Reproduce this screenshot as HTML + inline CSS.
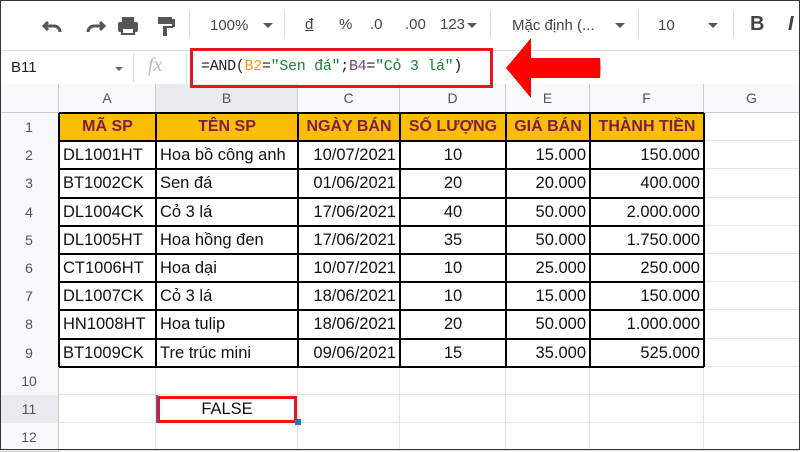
<!DOCTYPE html>
<html><head><meta charset="utf-8"><style>
body{margin:0;width:800px;height:450px;overflow:hidden;background:#fff;font-family:"Liberation Sans",Arial,sans-serif;position:relative}
.a{position:absolute}
.tb{color:#444;font-size:15px}
.cell{position:absolute;font-size:16.5px;color:#111;white-space:nowrap;line-height:28px}
.hd{position:absolute;background:#f8f9fa;color:#555;font-size:14px;text-align:center;border-right:1px solid #ccc;border-bottom:1px solid #ccc;box-sizing:border-box}
</style></head><body>
<div class="a" style="left:0;top:0;width:800px;height:50px;background:#fff;border-bottom:1px solid #ddd"></div>
<svg class="a" style="left:40px;top:14px" width="170" height="24" viewBox="0 0 170 24">
<path d="M8 8 L4 12 L8 16 M4 12 H14 a6 6 0 0 1 6 6" stroke="#555" stroke-width="3" fill="none"/>
<path d="M60 8 L64 12 L60 16 M64 12 H54 a6 6 0 0 0 -6 6" stroke="#555" stroke-width="3" fill="none"/>
<rect x="82" y="3" width="12" height="5" fill="#555"/><rect x="78" y="8" width="20" height="10" rx="2" fill="#555"/><rect x="82" y="14" width="12" height="6" fill="#fff" stroke="#555" stroke-width="2"/>
<rect x="118" y="3" width="14" height="7" fill="#555"/><rect x="132" y="5" width="3" height="8" fill="#555"/><rect x="123" y="12" width="10" height="2" fill="#555"/><rect x="123" y="12" width="4" height="10" fill="#555"/>
</svg>
<div class="a" style="left:189px;top:10px;width:1px;height:28px;background:#ddd"></div>
<div class="a tb" style="left:210px;top:17px">100%</div>
<div class="a" style="left:263px;top:23px;border:5px solid transparent;border-top-color:#555"></div>
<div class="a" style="left:284px;top:10px;width:1px;height:28px;background:#ddd"></div>
<div class="a tb" style="left:305px;top:16px;text-decoration:underline">đ</div>
<div class="a tb" style="left:339px;top:16px">%</div>
<div class="a tb" style="left:370px;top:16px">.0</div>
<div class="a tb" style="left:405px;top:16px">.00</div>
<div class="a tb" style="left:440px;top:16px">123</div>
<div class="a" style="left:467px;top:23px;border:5px solid transparent;border-top-color:#555"></div>
<div class="a" style="left:490px;top:10px;width:1px;height:28px;background:#ddd"></div>
<div class="a tb" style="left:512px;top:17px">Mặc định (...</div>
<div class="a" style="left:615px;top:23px;border:5px solid transparent;border-top-color:#555"></div>
<div class="a" style="left:638px;top:10px;width:1px;height:28px;background:#ddd"></div>
<div class="a tb" style="left:658px;top:17px">10</div>
<div class="a" style="left:708px;top:23px;border:5px solid transparent;border-top-color:#555"></div>
<div class="a" style="left:733px;top:10px;width:1px;height:28px;background:#ddd"></div>
<div class="a" style="left:750px;top:13px;font-size:20px;font-weight:bold;color:#444">B</div>
<div class="a" style="left:788px;top:13px;font-size:20px;font-style:italic;font-weight:bold;color:#444">I</div>
<div class="a" style="left:0;top:51px;width:800px;height:33px;border-bottom:1px solid #ccc"></div>
<div class="a" style="left:11px;top:59px;font-size:15px;color:#222">B11</div>
<div class="a" style="left:115px;top:67px;border:4px solid transparent;border-top-color:#666"></div>
<div class="a" style="left:133px;top:54px;width:1px;height:28px;background:#ddd"></div>
<div class="a" style="left:148px;top:54px;font-size:20px;font-style:italic;color:#bbb;font-family:'Liberation Serif',serif">fx</div>
<div class="a" style="left:186px;top:54px;width:1px;height:28px;background:#ddd"></div>
<div class="a" style="left:201px;top:58px;font-size:15px;font-family:'Liberation Mono','DejaVu Sans Mono',monospace;color:#222;letter-spacing:-0.3px">=AND(<span style="color:#f7981d">B2</span>=<span style="color:#188038">"Sen đá"</span>;<span style="color:#7e3794">B4</span>=<span style="color:#188038">"Cỏ 3 lá"</span>)</div>
<div class="hd" style="left:0;top:84px;width:59px;height:29px"></div>
<div class="hd" style="left:59px;top:84px;width:97px;height:29px;line-height:29px">A</div>
<div class="hd" style="left:156px;top:84px;width:142px;height:29px;line-height:29px;background:#e8eaed">B</div>
<div class="hd" style="left:298px;top:84px;width:102px;height:29px;line-height:29px">C</div>
<div class="hd" style="left:400px;top:84px;width:106px;height:29px;line-height:29px">D</div>
<div class="hd" style="left:506px;top:84px;width:84px;height:29px;line-height:29px">E</div>
<div class="hd" style="left:590px;top:84px;width:114px;height:29px;line-height:29px">F</div>
<div class="hd" style="left:704px;top:84px;width:96px;height:29px;line-height:29px">G</div>
<div class="a" style="left:190px;top:48px;width:297px;height:34px;border:3px solid #e8161b;z-index:5"></div>
<svg class="a" style="left:500px;top:34px;z-index:5" width="110" height="72"><path d="M6 34 L31 4 L31 24 L100 24 Q101 34 100 44 L31 44 L31 64 Z" fill="#fe0000"/></svg>
<div id="g"></div>
<script>
var cols=[59,156,298,400,506,590,704,800];
var data=[
["MÃ SP","TÊN SP","NGÀY BÁN","SỐ LƯỢNG","GIÁ BÁN","THÀNH TIỀN"],
["DL1001HT","Hoa bồ công anh","10/07/2021","10","15.000","150.000"],
["BT1002CK","Sen đá","01/06/2021","20","20.000","400.000"],
["DL1004CK","Cỏ 3 lá","17/06/2021","40","50.000","2.000.000"],
["DL1005HT","Hoa hồng đen","17/06/2021","35","50.000","1.750.000"],
["CT1006HT","Hoa dại","10/07/2021","10","25.000","250.000"],
["DL1007CK","Cỏ 3 lá","18/06/2021","10","15.000","150.000"],
["HN1008HT","Hoa tulip","18/06/2021","20","50.000","1.000.000"],
["BT1009CK","Tre trúc mini","09/06/2021","15","35.000","525.000"]];
var h='';var top0=113,rh=28.2;
for(var r=0;r<12;r++){var y=top0+r*rh;
h+='<div class="hd" style="left:0;top:'+y+'px;width:59px;height:'+(rh+1)+'px;line-height:'+rh+'px;'+(r==10?'background:#e8eaed;':'')+'">'+(r+1)+'</div>';
for(var c=0;c<7;c++){h+='<div class="a" style="left:'+cols[c]+'px;top:'+y+'px;width:'+(cols[c+1]-cols[c])+'px;height:'+rh+'px;box-sizing:border-box;border-right:1px solid #e2e2e2;border-bottom:1px solid #e2e2e2"></div>';}
if(r<9){var row=data[r];for(var c=0;c<6;c++){var x=cols[c],w=cols[c+1]-cols[c];
if(r==0){h+='<div class="cell" style="left:'+x+'px;top:'+y+'px;width:'+w+'px;height:'+rh+'px;background:#fbbc04;color:#7b1f48;font-weight:bold;text-align:center;font-size:16px">'+row[c]+'</div>';}
else{var al=c<2?'left;padding-left:4px':'right;padding-right:4px';if(c==3)al='center';
h+='<div class="cell" style="left:'+x+'px;top:'+y+'px;width:'+w+'px;box-sizing:border-box;text-align:'+al+'">'+row[c]+'</div>';}}}}
for(var r=0;r<=9;r++){h+='<div class="a" style="left:59px;top:'+(top0+r*rh-1)+'px;width:645px;height:2px;background:#000"></div>';}
for(var c=0;c<7;c++){h+='<div class="a" style="left:'+(cols[c]-1)+'px;top:'+top0+'px;width:2px;height:'+(9*rh)+'px;background:#000"></div>';}
var y11=top0+10*rh;
h+='<div class="cell" style="left:156px;top:'+y11+'px;width:142px;text-align:center">FALSE</div>';
h+='<div class="a" style="left:156px;top:'+y11+'px;width:2px;height:'+rh+'px;background:#1a73e8"></div>';
h+='<div class="a" style="left:157px;top:'+(y11+1)+'px;width:134px;height:21px;border:3px solid #e8161b"></div>';
h+='<div class="a" style="left:295px;top:'+(y11+rh-4)+'px;width:6px;height:6px;background:#1a73e8"></div>';
document.getElementById('g').innerHTML=h;
</script>
<div class="a" style="left:0;top:0;width:798px;height:448px;border:1px solid #333;z-index:9"></div>
</body></html>
